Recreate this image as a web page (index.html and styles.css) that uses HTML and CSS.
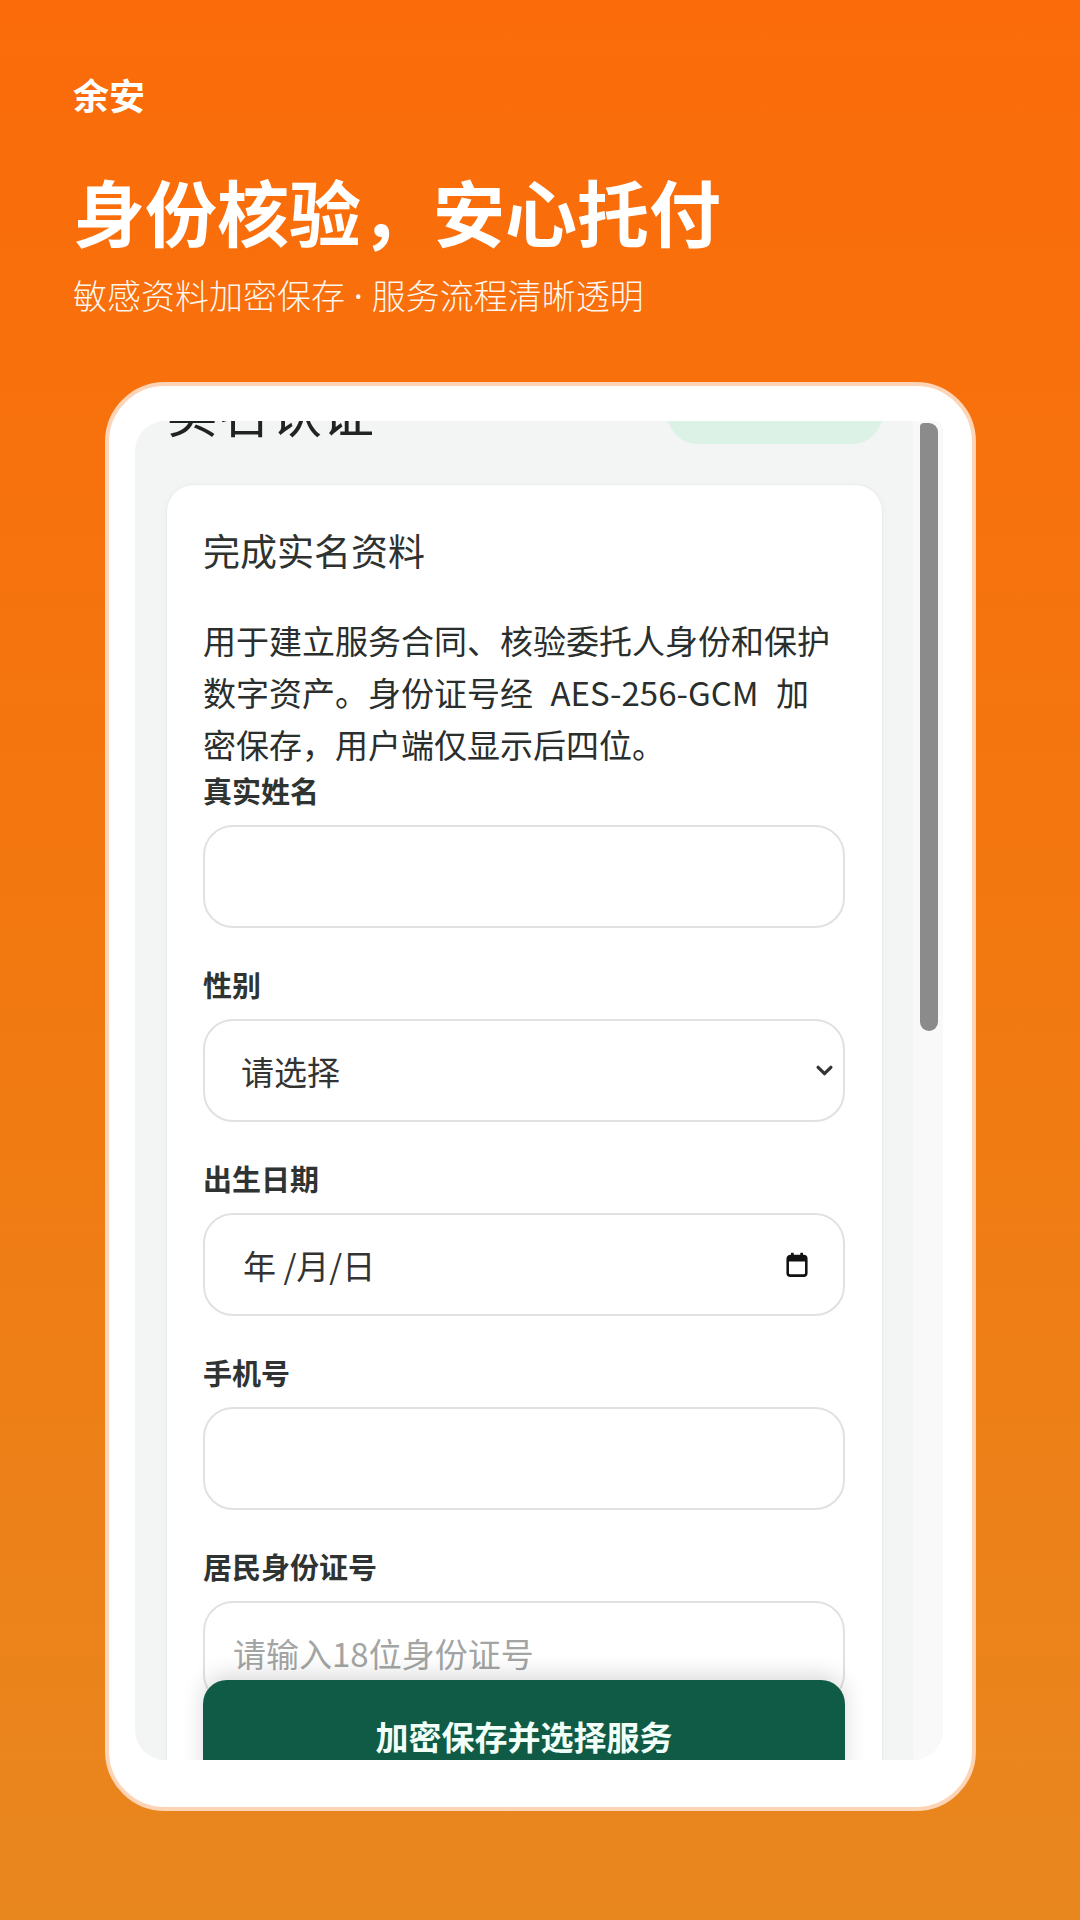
FILE: index.html
```html
<!DOCTYPE html>
<html lang="zh-CN">
<head>
<meta charset="utf-8">
<title>余安 - 身份核验</title>
<link rel="stylesheet" href="styles.css">
</head>
<body>
<div class="page">
  <header class="hero">
    <div class="brand">余安</div>
    <h1 class="headline">身份核验，安心托付</h1>
    <p class="subline">敏感资料加密保存<span class="dot"> · </span>服务流程清晰透明</p>
  </header>

  <div class="device">
    <div class="screen">
      <div class="viewport">
        <div class="scroller">
          <div class="top-row">
            <h2 class="page-title">实名认证</h2>
            <span class="status-pill"></span>
          </div>
          <section class="card">
            <h3 class="card-title">完成实名资料</h3>
            <p class="card-desc">用于建立服务合同、核验委托人身份和保护数字资产。身份证号经 AES-256-GCM 加密保存，用户端仅显示后四位。</p>

            <div class="field">
              <label class="field-label">真实姓名</label>
              <input class="control" type="text">
            </div>

            <div class="field">
              <label class="field-label">性别</label>
              <div class="control control-select">
                <span class="control-text">请选择</span>
                <svg class="chevron" viewBox="0 0 16 10" width="17" height="11"><path d="M2 2 L8 8 L14 2" fill="none" stroke="#333" stroke-width="3" stroke-linecap="round" stroke-linejoin="round"/></svg>
              </div>
            </div>

            <div class="field">
              <label class="field-label">出生日期</label>
              <div class="control control-date">
                <span class="control-text">年 /月/日</span>
                <svg class="cal" viewBox="0 0 16 18" width="24" height="27"><rect x="1.8" y="3.4" width="12.4" height="13" rx="1.8" fill="none" stroke="#111" stroke-width="1.7"/><rect x="1.8" y="3.4" width="12.4" height="3.6" fill="#111"/><rect x="4" y="1.2" width="1.8" height="3" fill="#111"/><rect x="10.2" y="1.2" width="1.8" height="3" fill="#111"/></svg>
              </div>
            </div>

            <div class="field">
              <label class="field-label">手机号</label>
              <input class="control" type="tel">
            </div>

            <div class="field">
              <label class="field-label">居民身份证号</label>
              <input class="control" type="text" placeholder="请输入18位身份证号">
            </div>
          </section>
        </div>
        <button class="submit" type="button">加密保存并选择服务</button>
      </div>
      <div class="scrollbar"><div class="thumb"></div></div>
    </div>
  </div>
</div>
</body>
</html>
```

FILE: styles.css
```css
* { box-sizing: border-box; }
html, body { margin: 0; padding: 0; }
body {
  width: 1080px;
  height: 1920px;
  overflow: hidden;
  font-family: "Noto Sans CJK SC", "Noto Sans", sans-serif;
  background: linear-gradient(180deg, #fb6b0a 0%, #f3770f 45%, #e9871f 100%);
}
.page { width: 1080px; height: 1920px; }

.hero { padding: 73px 0 0 73px; color: #fff; }
.brand { font-size: 36px; font-weight: 700; line-height: 43px; }
.headline {
  margin: 51px 0 0;
  font-size: 72px;
  font-weight: 700;
  line-height: 86px;
  letter-spacing: 0;
}
.subline {
  margin: 20px 0 0;
  font-size: 34px;
  font-weight: 300;
  line-height: 44px;
  color: rgba(255,255,255,0.94);
}
.subline .dot { font-family: "Noto Sans", sans-serif; font-weight: 400; }

.device {
  margin: 64px 0 0 105px;
  width: 871px;
  height: 1429px;
  background: #fff;
  border: 4px solid #fdd4b6;
  border-radius: 60px;
  padding: 35px 29px 47px 26px;
}
.screen {
  width: 808px;
  height: 1339px;
  border-radius: 30px 10px 30px 30px;
  overflow: hidden;
  display: flex;
  background: #f3f5f4;
}
.viewport {
  position: relative;
  flex: 1;
  overflow: hidden;
}
.scroller { padding: 0 30px 0 31px; margin-top: -41px; }
.scrollbar {
  width: 30px;
  background: #f9f9f9;
  padding: 2px 5px 0 7px;
}
.thumb {
  width: 18px;
  height: 608px;
  background: #8b8b8b;
  border-radius: 4px 9px 9px 9px;
}

.top-row {
  display: flex;
  justify-content: space-between;
  align-items: center;
  height: 62px;
}
.page-title {
  margin: 0;
  font-size: 52px;
  font-weight: 400;
  line-height: 62px;
  color: #1f2321;
}
.status-pill {
  display: block;
  width: 216px;
  height: 62px;
  margin-top: 4px;
  border-radius: 31px;
  background: #dcf2e6;
}

.card {
  margin-top: 42px;
  background: #fff;
  border: 1px solid #e9ecea;
  border-radius: 28px;
  padding: 41px 37px 60px 36px;
  box-shadow: 0 2px 8px rgba(0,0,0,0.03);
}
.card-title {
  margin: 0;
  font-size: 37px;
  font-weight: 400;
  line-height: 48px;
  color: #2e3230;
}
.card-desc {
  margin: 40px 12px 2px 0;
  font-size: 33px;
  line-height: 52px;
  word-spacing: 10px;
  color: #2a2e2c;
}
.field { margin-bottom: 38px; }
.field-label {
  display: block;
  font-size: 29px;
  font-weight: 700;
  line-height: 36px;
  color: #2f3432;
  margin-bottom: 17px;
}
.control {
  display: block;
  width: 100%;
  height: 103px;
  border: 2px solid #e0e2e1;
  border-radius: 30px;
  background: #fff;
  font-family: inherit;
  font-size: 33px;
  color: #333;
  padding: 0 28px;
  outline: none;
}
.control::placeholder { color: #a3a5a4; }
.control-select, .control-date {
  display: flex;
  align-items: center;
  justify-content: space-between;
}
.control-select { padding: 0 10px 0 36px; }
.control-date { padding: 0 34px 0 38px; }
.control-text { color: #333; font-size: 33px; }
.chevron { display: block; }
.cal { display: block; }

.submit {
  position: absolute;
  left: 68px;
  right: 68px;
  top: 1259px;
  height: 112px;
  border: none;
  border-radius: 24px;
  background: #0f5b46;
  color: #f1fff8;
  font-family: inherit;
  font-size: 33px;
  font-weight: 700;
  padding: 0;
  box-shadow: 0 -6px 22px rgba(0,0,0,0.14);
}
```
